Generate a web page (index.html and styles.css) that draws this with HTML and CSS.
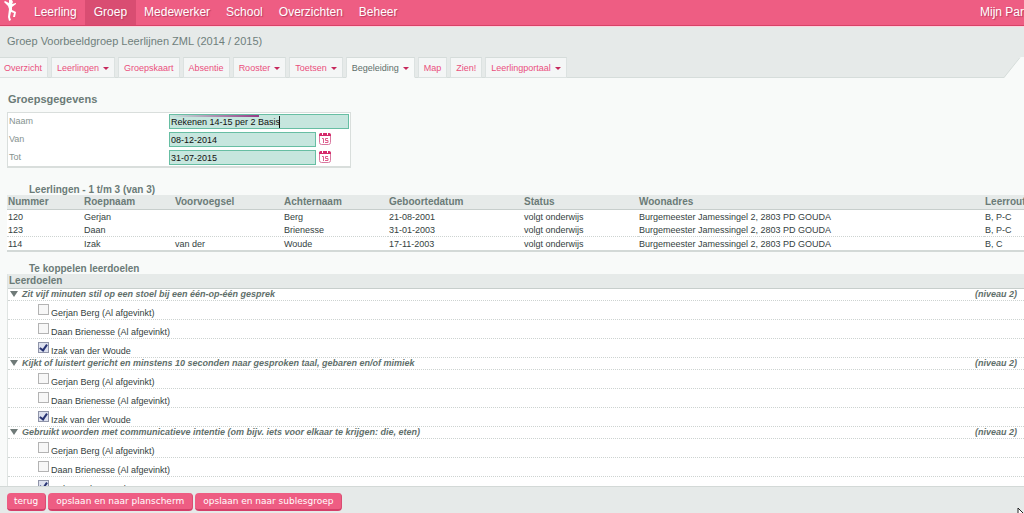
FILE: index.html
```
<!DOCTYPE html>
<html lang="nl">
<head>
<meta charset="utf-8">
<title>Groepsgegevens</title>
<link rel="stylesheet" href="styles.css">
</head>
<body>
<header class="topbar">
  <svg class="logo" viewBox="0 0 20 21" aria-hidden="true">
    <path d="M9 0h3l1 2-1 2 4-1v1l-4 3v3l4 2-1 5h-2l1-4-3-1-1 5 1 3-2 1-1-4 1-8-1-3-4-4 1-1 4 2z"/>
  </svg>
  <nav class="mainnav">
    <a href="#">Leerling</a>
    <a href="#" class="current">Groep</a>
    <a href="#">Medewerker</a>
    <a href="#">School</a>
    <a href="#">Overzichten</a>
    <a href="#">Beheer</a>
  </nav>
  <a href="#" class="account">Mijn Parn</a>
</header>
<div class="heading">
  <h1>Groep Voorbeeldgroep Leerlijnen ZML (2014 / 2015)</h1>
  <div class="tabrow">
    <nav class="tabs">
      <a href="#">Overzicht</a>
      <a href="#" class="menu">Leerlingen</a>
      <a href="#">Groepskaart</a>
      <a href="#">Absentie</a>
      <a href="#" class="menu">Rooster</a>
      <a href="#" class="menu">Toetsen</a>
      <a href="#" class="menu active">Begeleiding</a>
      <a href="#">Map</a>
      <a href="#">Zien!</a>
      <a href="#" class="menu">Leerlingportaal</a>
    </nav>
    <svg class="corner" viewBox="0 0 20 21" aria-hidden="true"><path d="M0 21 16 0h4v21z" fill="#f8faf9"/><path d="M0 20.500 16 .5" fill="none" stroke="#d6dddb"/></svg>
  </div>
</div>
<main class="content">
  <h2>Groepsgegevens</h2>
  <form class="details">
    <label for="naam">Naam</label>
    <div class="field"><input id="naam" class="wide" type="text" value="Rekenen 14-15 per 2 Basis"><span class="caret"></span></div>
    <label for="van">Van</label>
    <div class="field"><input id="van" type="text" value="08-12-2014">
      <button type="button" class="cal" aria-label="Kies datum van"><svg viewBox="0 0 12 13"><rect x=".5" y="1.500" width="11" height="11" rx="2" fill="#fff" stroke="#d8789f"/><path d="M0 3q0-2 2-2h8q2 0 2 2v1H0z" fill="#d52b6b"/><path d="M3.500 0v3M8.500 0v3" stroke="#fff"/><path d="M3 6.500h1.500V11M9 6.500H6.500v2H9v2H6" fill="none" stroke="#df5b8c"/></svg></button></div>
    <label for="tot">Tot</label>
    <div class="field"><input id="tot" type="text" value="31-07-2015">
      <button type="button" class="cal" aria-label="Kies datum tot"><svg viewBox="0 0 12 13"><rect x=".5" y="1.500" width="11" height="11" rx="2" fill="#fff" stroke="#d8789f"/><path d="M0 3q0-2 2-2h8q2 0 2 2v1H0z" fill="#d52b6b"/><path d="M3.500 0v3M8.500 0v3" stroke="#fff"/><path d="M3 6.500h1.500V11M9 6.500H6.500v2H9v2H6" fill="none" stroke="#df5b8c"/></svg></button></div>
  </form>

  <h3>Leerlingen - 1 t/m 3 (van 3)</h3>
  <table class="pupils">
    <colgroup><col class="c-nr"><col class="c-first"><col class="c-prefix"><col class="c-last"><col class="c-birth"><col class="c-status"><col class="c-address"><col></colgroup>
    <thead><tr><th>Nummer</th><th>Roepnaam</th><th>Voorvoegsel</th><th>Achternaam</th><th>Geboortedatum</th><th>Status</th><th>Woonadres</th><th>Leerroute</th></tr></thead>
    <tbody>
      <tr><td>120</td><td>Gerjan</td><td></td><td>Berg</td><td>21-08-2001</td><td>volgt onderwijs</td><td>Burgemeester Jamessingel 2, 2803 PD GOUDA</td><td>B, P-C</td></tr>
      <tr><td>123</td><td>Daan</td><td></td><td>Brienesse</td><td>31-01-2003</td><td>volgt onderwijs</td><td>Burgemeester Jamessingel 2, 2803 PD GOUDA</td><td>B, P-C</td></tr>
      <tr><td>114</td><td>Izak</td><td>van der</td><td>Woude</td><td>17-11-2003</td><td>volgt onderwijs</td><td>Burgemeester Jamessingel 2, 2803 PD GOUDA</td><td>B, C</td></tr>
    </tbody>
  </table>

  <h3>Te koppelen leerdoelen</h3>
  <section class="goals">
    <h4>Leerdoelen</h4>
    <div class="goal"><span class="arrow"></span><span>Zit vijf minuten stil op een stoel bij een één-op-één gesprek</span><span class="level">(niveau 2)</span></div>
    <label class="pupil"><input type="checkbox"><span>Gerjan Berg (Al afgevinkt)</span></label>
    <label class="pupil"><input type="checkbox"><span>Daan Brienesse (Al afgevinkt)</span></label>
    <label class="pupil"><input type="checkbox" checked><span>Izak van der Woude</span></label>
    <div class="goal"><span class="arrow"></span><span>Kijkt of luistert gericht en minstens 10 seconden naar gesproken taal, gebaren en/of mimiek</span><span class="level">(niveau 2)</span></div>
    <label class="pupil"><input type="checkbox"><span>Gerjan Berg (Al afgevinkt)</span></label>
    <label class="pupil"><input type="checkbox"><span>Daan Brienesse (Al afgevinkt)</span></label>
    <label class="pupil"><input type="checkbox" checked><span>Izak van der Woude</span></label>
    <div class="goal"><span class="arrow"></span><span>Gebruikt woorden met communicatieve intentie (om bijv. iets voor elkaar te krijgen: die, eten)</span><span class="level">(niveau 2)</span></div>
    <label class="pupil"><input type="checkbox"><span>Gerjan Berg (Al afgevinkt)</span></label>
    <label class="pupil"><input type="checkbox"><span>Daan Brienesse (Al afgevinkt)</span></label>
    <label class="pupil"><input type="checkbox" checked><span>Izak van der Woude</span></label>
  </section>
</main>
<footer class="actions">
  <button type="button">terug</button>
  <button type="button">opslaan en naar planscherm</button>
  <button type="button">opslaan en naar sublesgroep</button>
</footer>
<svg class="pointer" viewBox="0 0 12 18" aria-hidden="true"><path d="M1 1v14l4-4h6z" fill="#fff" stroke="#222"/></svg>
</body>
</html>
```
FILE: styles.css
```
*, *::after { box-sizing: border-box; }
body {
  margin: 0;
  height: 100vh;
  display: flex;
  flex-direction: column;
  overflow: hidden;
  position: relative;
  background: #f8faf9;
  color: #34413e;
  font: 9px/12px "Liberation Sans", Arial, sans-serif;
  white-space: nowrap;
}
a { text-decoration: none; }
h1, h2, h3, h4 { margin: 0; }

.topbar {
  flex: none;
  display: flex;
  height: 26px;
  background: #ee5d83;
  border-bottom: 1px solid #d94167;
  font-size: 12px;
  line-height: 24px;
  overflow: hidden;
}
.topbar a { color: #fff; text-shadow: 1px 1px 1px #b83e60; }
.logo { width: 20px; height: 21px; margin-right: 6px; fill: #fff; }
.mainnav { display: flex; }
.mainnav a { padding: 0 8px; }
.mainnav .current { padding: 0 9px; background: #d94d72; }
.account { margin-left: auto; width: 44px; }

.heading {
  flex: none;
  background: #e6eae9;
  border-top: 1px solid #fbd5df;
}
h1 {
  padding: 6px 7px 7px;
  font-size: 11px;
  font-weight: 400;
  line-height: 17px;
  color: #6f7f7c;
}
.tabrow { display: flex; justify-content: space-between; box-shadow: inset 0 -1px #d6dddb; }
.tabs { display: flex; gap: 3px; }
.tabs a {
  display: flex;
  align-items: center;
  gap: 4px;
  height: 21px;
  padding: 1px 5px 0;
  background: #f4f6f6;
  border: 1px solid #dce2e1;
  border-top-color: #d5dcda;
  color: #ea4f7d;
}
.tabs a:first-child { padding-left: 4px; border-left: 0; }
.tabs .menu::after {
  content: "";
  border: 3px solid transparent;
  border-top-color: #c6285c;
  border-bottom: 0;
}
.tabs .active { background: #f8faf9; border-bottom-color: #f8faf9; color: #5f6f6b; }
.corner { width: 20px; height: 21px; }

.content { flex: 1; min-height: 0; overflow: hidden; padding: 14px 0 0 7px; }
h2 { padding-left: 1px; font-size: 11px; line-height: 14px; color: #6b7b77; }
.details {
  display: grid;
  grid-template-columns: 161px 181px;
  row-gap: 3px;
  width: max-content;
  margin: 6px 0 5px;
  padding: 1px 0;
  background: #fff;
  border: 1px solid #d9dedc;
  border-bottom-width: 2px;
}
.details label { padding-left: 1px; line-height: 14px; color: #86938f; }
.field { display: flex; gap: 3px; position: relative; }
.field input {
  width: 147px;
  height: 15px;
  padding: 1px 1px 0;
  border: 1px solid #67bea3;
  background: #c6e6de;
  color: #111;
  font: inherit;
}
.field .wide {
  width: 180px;
  background: linear-gradient(90deg, #c6e6de, #963b86) 0 0 / 89px 2px no-repeat #c6e6de;
}
.caret { position: absolute; left: 110px; top: 2px; width: 1px; height: 12px; background: #111; }
.cal { width: 12px; height: 13px; padding: 0; border: 0; background: none; }
.cal svg { display: block; width: 12px; height: 13px; }

h3, h4, .pupils th {
  font-size: 10px;
  font-weight: 700;
  color: #6b7b77;
}
h3 { padding: 11px 0 0 22px; line-height: 11px; }
.pupils {
  width: 100%;
  table-layout: fixed;
  border-collapse: collapse;
  background: #fff;
  border-bottom: 2px solid #d3d9d7;
}
.pupils th {
  height: 14px;
  padding: 0 0 0 1px;
  background: #e6eae9;
  border-bottom: 1px solid #c7cecc;
  text-align: left;
  line-height: 13px;
}
.pupils td { padding: 1px 0 0 1px; line-height: 12px; }
.pupils tr:last-child td { border-top: 1px dotted #cdd3d1; }
.c-nr { width: 76px; }
.c-first { width: 91px; }
.c-prefix { width: 109px; }
.c-last { width: 105px; }
.c-birth { width: 135px; }
.c-status { width: 115px; }
.c-address { width: 346px; }

.goals { background: #fff; border-left: 1px solid #dfe4e2; }
h4 {
  padding-left: 1px;
  background: #e6eae9;
  border-bottom: 1px solid #c7cecc;
  line-height: 14px;
}
.goal {
  display: flex;
  align-items: center;
  gap: 4px;
  padding: 0 7px 0 2px;
  border-bottom: 1px dotted #cdd3d1;
  font-style: italic;
  font-weight: 700;
  line-height: 11px;
  color: #5f6f6b;
}
.arrow { border: 4px solid transparent; border-top: 6px solid #6f7a78; border-bottom: 0; }
.level { margin-left: auto; }
.pupil {
  display: flex;
  align-items: flex-start;
  gap: 2px;
  height: 19px;
  padding: 3px 0 0 30px;
  border-bottom: 1px dotted #cdd3d1;
}
.pupil span { padding-top: 3px; }
.pupil input {
  appearance: none;
  width: 11px;
  height: 11px;
  margin: 0;
  border: 1px solid #b3b3b3;
  background: #f7f7f7;
}
.pupil input:checked {
  border-color: #8f94a8;
  background: #dde1ef;
  display: flex;
  align-items: flex-start;
  justify-content: center;
}
.pupil input:checked::after {
  content: "";
  width: 5px;
  height: 8px;
  border: solid #263272;
  border-width: 0 2px 2px 0;
  transform: rotate(35deg);
}

.actions {
  flex: none;
  display: flex;
  gap: 2px;
  padding: 6px 7px 2px;
  background: #e6eae9;
  border-top: 1px solid #d3d9d7;
}
.actions button {
  height: 18px;
  padding: 1px 8px 0;
  border: 0;
  border-bottom: 2px solid #d43f69;
  border-right: 1px solid #d94d72;
  border-radius: 4px;
  background: #ee5d83;
  color: #fff;
  font: 9px/15px "DejaVu Sans", sans-serif;
}
.actions button:first-child { padding: 1px 7px 0; }
.pointer { position: absolute; right: -5px; bottom: -12px; width: 12px; height: 18px; }
```
